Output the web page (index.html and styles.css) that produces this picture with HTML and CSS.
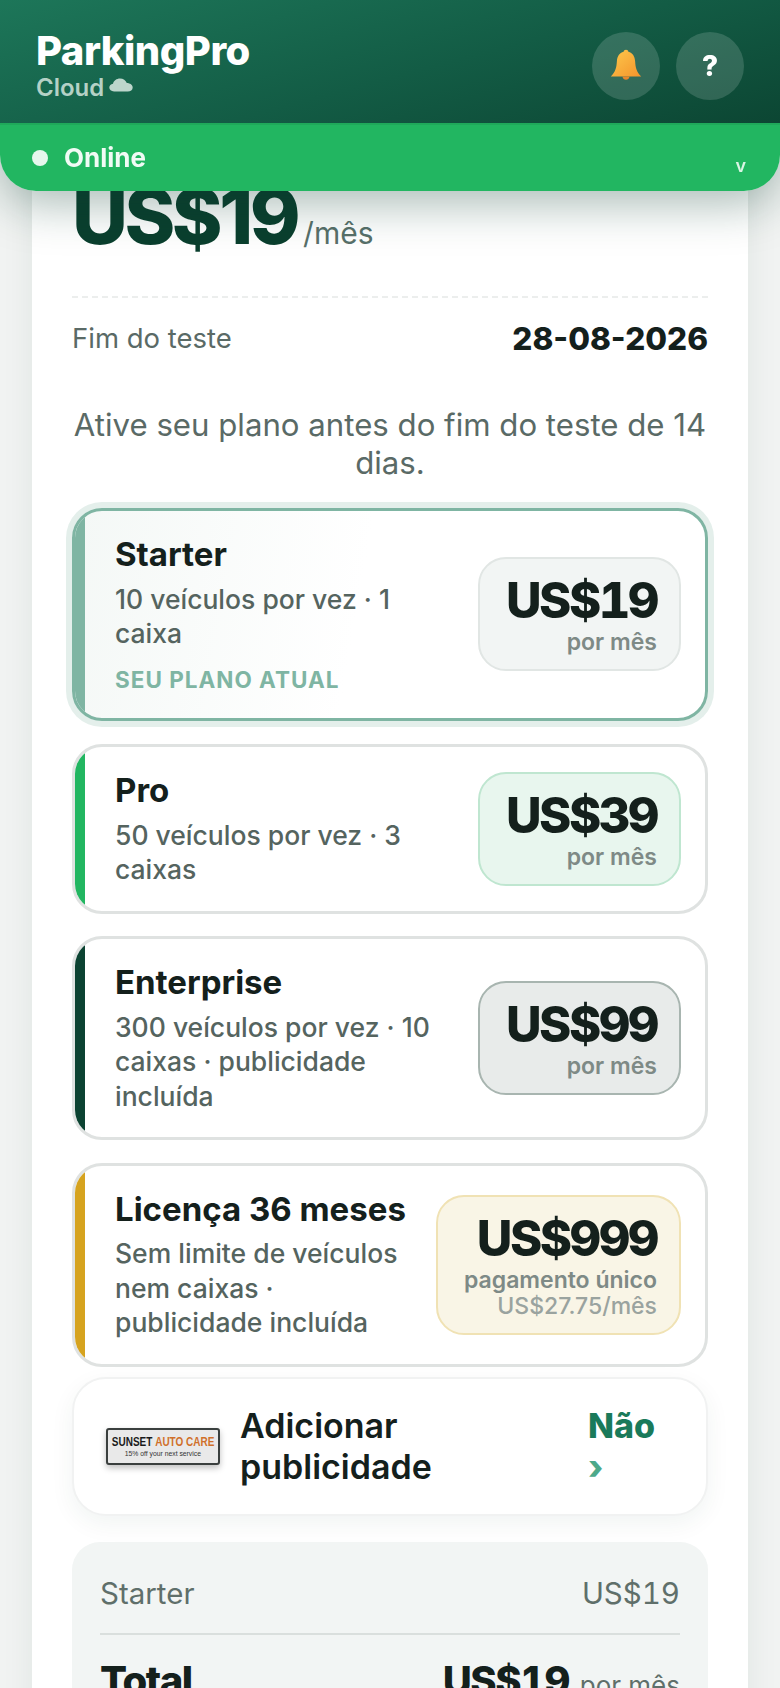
FILE: index.html
```html
<!DOCTYPE html>
<html lang="pt">
<head>
<meta charset="utf-8">
<title>ParkingPro</title>
<link rel="stylesheet" href="styles.css">
</head>
<body>
<header class="topbar">
  <div class="brandrow">
    <div class="brand">
      <div class="brand-name">ParkingPro</div>
      <div class="brand-sub">Cloud
        <svg class="cloud" viewBox="0 0 24 14" width="24" height="14"><path d="M5 13.500C2.200 13.500.3 11.800.3 9.600c0-2 1.500-3.600 3.700-3.800C4.800 2.800 7.600.6 11 .6c3.200 0 5.800 1.800 6.800 4.500 3.300.1 5.900 1.900 5.900 4.400 0 2.400-2.200 4-5 4z" fill="#bdd6cc"/></svg>
      </div>
    </div>
    <div class="actions">
      <button class="round">
        <svg viewBox="0 0 32 32" width="36" height="36"><defs><linearGradient id="bell" x1="0" y1="0" x2="1" y2="1"><stop offset="0" stop-color="#fdc94c"/><stop offset="1" stop-color="#f4942c"/></linearGradient></defs><path d="M16 1.500c1.200 0 2 .8 2.100 1.900 3.800 1 5.700 4.200 6 8.300.3 5 1.100 9.700 5.400 13.600H2.500c4.300-3.900 5.100-8.600 5.400-13.600.3-4.100 2.200-7.300 6-8.300.1-1.100.9-1.900 2.100-1.900z" fill="url(#bell)"/><path d="M12.800 25.300h6.400c-.3 1.800-1.600 2.900-3.200 2.900s-2.900-1.100-3.200-2.900z" fill="#e8862a"/></svg>
      </button>
      <button class="round help">?</button>
    </div>
  </div>
  <div class="status">
    <span class="dot"></span>
    <span class="status-text">Online</span>
    <span class="chev">v</span>
  </div>
</header>

<main class="page">
  <section class="panel">
    <div class="hero"><span class="hero-price">US$19</span><span class="hero-unit">/mês</span></div>
    <div class="trial"><span class="trial-label">Fim do teste</span><span class="trial-date">28-08-2026</span></div>
    <p class="notice">Ative seu plano antes do fim do teste de 14 dias.</p>

    <div class="plans">
      <article class="plan current">
        <span class="stripe stripe-current"></span>
        <div class="plan-body">
          <div class="plan-info">
            <h3>Starter</h3>
            <p>10 veículos por vez · 1 caixa</p>
            <div class="tag">SEU PLANO ATUAL</div>
          </div>
          <div class="price price-grey"><strong>US$19</strong><span>por mês</span></div>
        </div>
      </article>
      <article class="plan">
        <span class="stripe stripe-pro"></span>
        <div class="plan-body">
          <div class="plan-info">
            <h3>Pro</h3>
            <p>50 veículos por vez · 3 caixas</p>
          </div>
          <div class="price price-green"><strong>US$39</strong><span>por mês</span></div>
        </div>
      </article>
      <article class="plan">
        <span class="stripe stripe-ent"></span>
        <div class="plan-body">
          <div class="plan-info">
            <h3>Enterprise</h3>
            <p>300 veículos por vez · 10 caixas · publicidade incluída</p>
          </div>
          <div class="price price-dark"><strong>US$99</strong><span>por mês</span></div>
        </div>
      </article>
      <article class="plan">
        <span class="stripe stripe-lic"></span>
        <div class="plan-body">
          <div class="plan-info">
            <h3>Licença 36 meses</h3>
            <p>Sem limite de veículos nem caixas · publicidade incluída</p>
          </div>
          <div class="price price-gold"><strong>US$999</strong><span>pagamento único</span><em>US$27.75/mês</em></div>
        </div>
      </article>
    </div>

    <div class="addon">
      <div class="thumb">
        <div class="thumb-title">SUNSET <b>AUTO CARE</b></div>
        <div class="thumb-sub">15% off your next service</div>
      </div>
      <div class="addon-title">Adicionar publicidade</div>
      <div class="addon-state">Não <i>›</i></div>
    </div>

    <div class="summary">
      <div class="sum-row"><span>Starter</span><span>US$19</span></div>
      <div class="sum-total"><strong>Total</strong><div class="sum-amount"><strong>US$19</strong><span>por mês</span></div></div>
    </div>
  </section>
</main>
</body>
</html>
```
FILE: styles.css
```css
* { box-sizing: border-box; }
html, body { margin: 0; height: 1688px; overflow: hidden; }
body { background: #f1f3f2; font-family: Inter, "Noto Sans", sans-serif; color: #14201c; }

.topbar { position: fixed; top: 0; left: 0; width: 780px; z-index: 5; box-shadow: 0 12px 48px rgba(11, 61, 46, .36); border-radius: 0 0 36px 36px; }
.brandrow { height: 123px; background: linear-gradient(165deg, #1d7659 0%, #135c45 55%, #0c4633 100%); display: flex; justify-content: space-between; padding: 32px 36px 0; }
.brand-name { font-size: 40px; line-height: 40px; font-weight: 800; color: #fff; letter-spacing: -.5px; margin-top: -1px; }
.brand-sub { font-size: 24px; line-height: 34px; font-weight: 600; color: #b5d1c6; display: flex; align-items: center; gap: 5px; }
.cloud { margin-top: -6px; }
.actions { display: flex; gap: 16px; }
.round { width: 68px; height: 68px; border-radius: 50%; border: 0; padding: 0; background: rgba(255, 255, 255, .15); display: flex; align-items: center; justify-content: center; font-family: Inter, sans-serif; }
.help { color: #fff; font-size: 28px; font-weight: 800; }
.status { height: 68px; background: #22b661; border-radius: 0 0 36px 36px; display: flex; align-items: center; padding: 0 32px; border-top: 2px solid #1fa95a; }
.dot { width: 16px; height: 16px; border-radius: 50%; background: #e6f7ed; }
.status-text { margin-left: 16px; font-size: 26px; font-weight: 700; color: #f1fbf5; margin-top: -2px; }
.chev { margin-left: auto; font-size: 18px; font-weight: 600; color: #d9f5e4; padding: 14px 2px 0 0; }

.page { padding: 150px 32px 0; }
.panel { background: #fff; padding: 0 40px; box-shadow: 0 4px 30px rgba(11, 61, 46, .08); }

.hero { display: flex; align-items: baseline; gap: 6px; height: 148px; padding-top: 24px; border-bottom: 2px dashed #eceeed; }
.hero-price { font-size: 77px; line-height: 84px; font-weight: 800; letter-spacing: -3.500px; color: #0a3f2e; }
.hero-unit { font-size: 30px; color: #58706a; }

.trial { display: flex; justify-content: space-between; align-items: center; height: 80px; }
.trial-label { font-size: 27.500px; color: #5a6a66; }
.trial-date { font-size: 31.500px; font-weight: 800; color: #14201c; }

.notice { margin: 0 0 26px; text-align: center; font-size: 31.200px; line-height: 38px; color: #5a6a66; padding-top: 28px; }

.plans { display: flex; flex-direction: column; gap: 22.500px; }
.plan { display: flex; border: 3px solid #dfe2e1; border-radius: 30px; overflow: hidden; background: #fff; }
.plan.current { border-color: #7fb5a3; background: linear-gradient(100deg, #f4f8f6, #fff 45%); box-shadow: 0 0 0 6px #e4efeb; margin-bottom: 1px; }
.stripe { width: 10px; flex: none; }
.stripe-current { background: #7fb5a3; }
.stripe-pro { background: #22b661; }
.stripe-ent { background: #0c4332; }
.stripe-lic { background: #d6a31f; }
.plan-body { flex: 1; min-width: 0; display: flex; align-items: center; gap: 24px; padding: 24px 24px 24px 30px; }
.plan-info { flex: 1; min-width: 0; }
.plan-info h3 { margin: 0 0 8px; font-size: 33px; line-height: 38.500px; font-weight: 700; color: #14201c; }
.plan-info p { margin: 0; font-size: 26.500px; line-height: 34.500px; font-weight: 500; color: #55645f; }
.tag { margin-top: 14px; font-size: 22.500px; line-height: 29px; font-weight: 700; letter-spacing: 1px; color: #7fb5a3; }

.price { flex: none; width: 203px; border-radius: 28px; border: 2px solid; padding: 14px 22px 14px 0; display: flex; flex-direction: column; align-items: flex-end; }
.price strong { font-size: 49px; line-height: 56px; font-weight: 800; letter-spacing: -2.500px; font-variant-numeric: tabular-nums; color: #14201c; }
.price span { font-size: 23px; line-height: 26px; font-weight: 600; color: #7e8a86; }
.price em { font-style: normal; font-size: 23px; line-height: 26px; font-weight: 500; color: #9aa39f; }
.price-grey { background: #f2f5f4; border-color: #e1e6e4; }
.price-green { background: #e8f6ee; border-color: #bfe6d0; }
.price-dark { background: #e8ebea; border-color: #a8b5b0; }
.price-gold { width: 245px; background: #f9f5e6; border-color: #f0e2b4; }

.addon { margin-top: 10px; height: 139px; border: 2px solid #f1f2f2; border-radius: 34px; background: #fff; box-shadow: 0 8px 24px rgba(11, 61, 46, .06); display: flex; align-items: center; padding: 0 32px; gap: 20px; }
.thumb { flex: none; width: 114px; height: 37px; border: 2px solid #3a3f3e; border-radius: 3px; background: #e9e9e9; box-shadow: 0 3px 6px rgba(0, 0, 0, .25); overflow: hidden; font-family: "Liberation Sans", sans-serif; display: flex; flex-direction: column; align-items: center; padding-top: 5px; }
.thumb-title { font-size: 12.500px; line-height: 14px; font-weight: 700; color: #1a1a1a; white-space: nowrap; transform: scaleX(.8); flex: none; }
.thumb-title b { color: #d0702a; }
.thumb-sub { font-size: 8px; line-height: 10px; color: #333; white-space: nowrap; transform: scaleX(.85); flex: none; }
.addon-title { flex: 1; min-width: 0; font-size: 34px; line-height: 41px; font-weight: 600; color: #14201c; padding-right: 30px; }
.addon-state { flex: none; width: 86px; font-size: 34px; line-height: 41px; font-weight: 800; color: #1a7a5a; }
.addon-state i { font-style: normal; color: #4da98a; }

.summary { margin-top: 26px; background: #f2f5f4; border-radius: 28px; padding: 29px 28px 0; height: 200px; }
.sum-row { display: flex; justify-content: space-between; font-size: 29.500px; line-height: 44px; color: #5f6f6a; font-variant-numeric: tabular-nums; padding-bottom: 18px; border-bottom: 2px solid #dadfdd; }
.sum-total { display: flex; justify-content: space-between; align-items: baseline; padding-top: 21px; }
.sum-amount { display: flex; align-items: baseline; gap: 11px; }
.sum-total strong { font-size: 40px; font-weight: 800; letter-spacing: -1.500px; font-variant-numeric: tabular-nums; color: #14201c; }
.sum-total span { font-size: 26px; color: #5f6f6a; }
```
